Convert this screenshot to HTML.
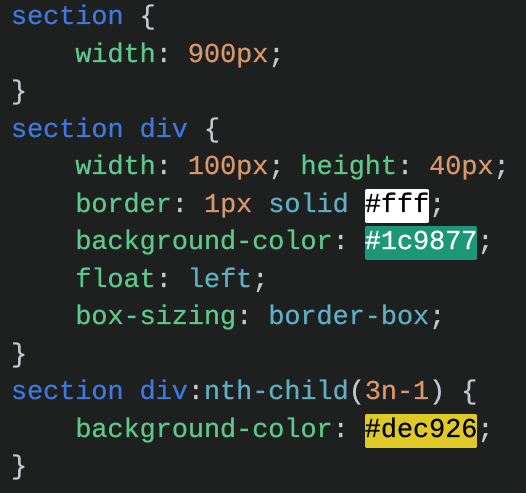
<!DOCTYPE html>
<html><head><meta charset="utf-8"><style>
html,body{margin:0;padding:0;background:#1e1f1f;width:526px;height:493px;overflow:hidden}
pre{margin:0;position:absolute;left:11px;top:0px;font-family:"Liberation Mono",monospace;font-size:26.8px;line-height:37.5px;color:#c5c8cc;-webkit-text-stroke:0.3px}
.k{color:#3f78e0}.p{color:#5dc98a}.n{color:#d8986a}.v{color:#5fb0c4}
.hw{background:#fff;color:#000;border-radius:2px;padding:2px 0}
.hg{background:#1c9877;color:#fff;border-radius:2px;padding:2px 0}
.hy{background:#dec926;color:#000;border-radius:2px;padding:2px 0}
</style></head><body><pre><span class="k">section</span> {
    <span class="p">width</span>: <span class="n">900px</span>;
}
<span class="k">section div</span> {
    <span class="p">width</span>: <span class="n">100px</span>; <span class="p">height</span>: <span class="n">40px</span>;
    <span class="p">border</span>: <span class="n">1px</span> <span class="v">solid</span> <span class="hw">#fff</span>;
    <span class="p">background-color</span>: <span class="hg">#1c9877</span>;
    <span class="p">float</span>: <span class="v">left</span>;
    <span class="p">box-sizing</span>: <span class="v">border-box</span>;
}
<span class="k">section div</span>:<span class="v">nth-child</span>(<span class="n">3n-1</span>) {
    <span class="p">background-color</span>: <span class="hy">#dec926</span>;
}</pre></body></html>
